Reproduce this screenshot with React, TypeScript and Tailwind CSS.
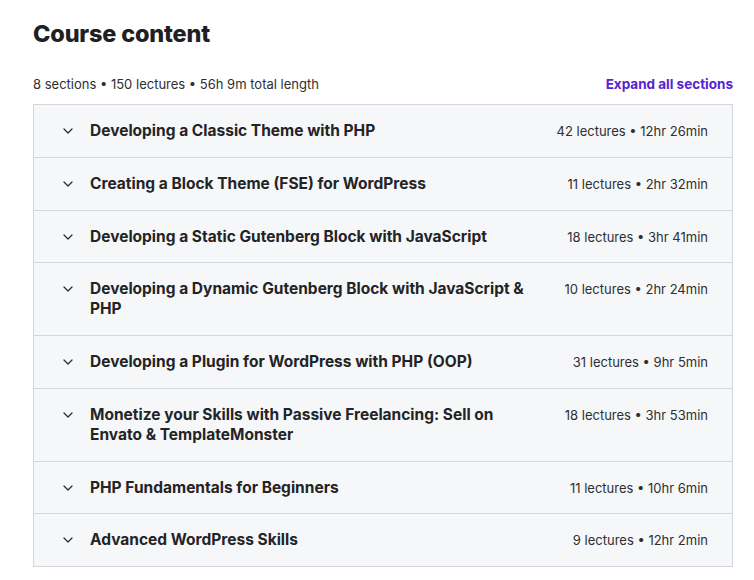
import React from "react";

const sections = [
  { title: "Developing a Classic Theme with PHP", stats: "42 lectures • 12hr 26min" },
  { title: "Creating a Block Theme (FSE) for WordPress", stats: "11 lectures • 2hr 32min" },
  { title: "Developing a Static Gutenberg Block with JavaScript", stats: "18 lectures • 3hr 41min" },
  { title: "Developing a Dynamic Gutenberg Block with JavaScript & PHP", stats: "10 lectures • 2hr 24min" },
  { title: "Developing a Plugin for WordPress with PHP (OOP)", stats: "31 lectures • 9hr 5min" },
  { title: "Monetize your Skills with Passive Freelancing: Sell on Envato & TemplateMonster", stats: "18 lectures • 3hr 53min" },
  { title: "PHP Fundamentals for Beginners", stats: "11 lectures • 10hr 6min" },
  { title: "Advanced WordPress Skills", stats: "9 lectures • 12hr 2min" },
];

function Chevron() {
  return (
    <svg width="10" height="6" viewBox="0 0 10 6" className="shrink-0 mt-[7px]">
      <path d="M1 1 L5 5 L9 1" fill="none" stroke="#2d2f31" strokeWidth="1.3" strokeLinecap="round" strokeLinejoin="round" />
    </svg>
  );
}

export default function App() {
  return (
    <div className="w-[754px] h-[580px] bg-white text-[#2d2f31] font-['Inter',sans-serif]">
      <div className="pl-[33px] pr-[21px] pt-[19px]">
        <h2 className="text-[23.5px] leading-[30px] font-extrabold tracking-[-0.2px] text-[#1f2022]">Course content</h2>
        <div className="mt-[25px] flex items-end justify-between text-[13px] leading-[20px]">
          <span>8 sections • 150 lectures • 56h 9m total length</span>
          <button className="font-bold text-[13.5px] text-[#5624d0]">Expand all sections</button>
        </div>
        <div className="mt-[10px] border border-[#d1d7dc] border-b-0">
          {sections.map((s) => (
            <div
              key={s.title}
              className="flex items-start bg-[#f6f7f9] border-b border-[#d1d7dc] pl-[29px] pr-[24px] pt-4 pb-[15.75px]"
            >
              <Chevron />
              <div className="ml-[17px] flex-1 pr-6 text-[15.5px] leading-[20px] font-bold text-[#232426] max-w-[460px]">{s.title}</div>
              <div className="ml-auto text-[13px] leading-[20px] whitespace-nowrap">{s.stats}</div>
            </div>
          ))}
        </div>
      </div>
    </div>
  );
}
